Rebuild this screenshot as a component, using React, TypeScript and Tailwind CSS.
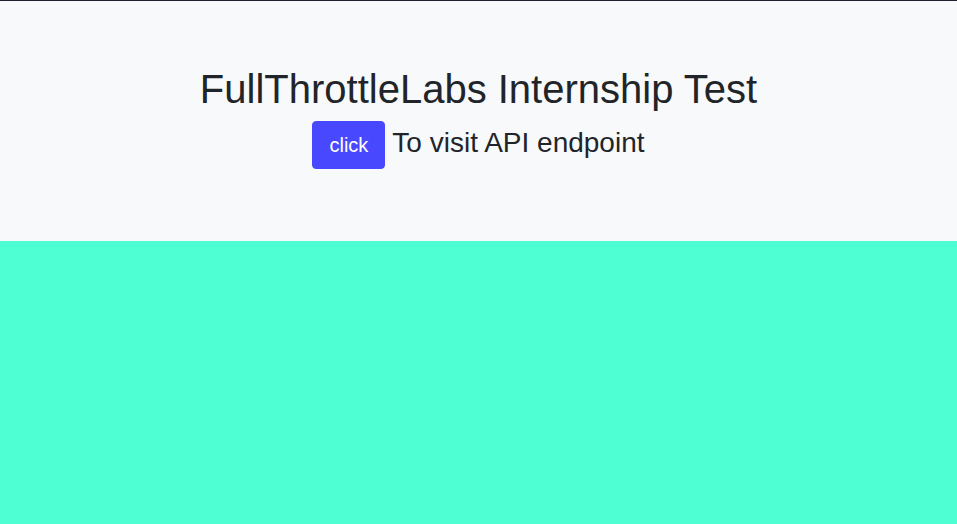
import React from 'react';

const App: React.FC = () => {
    return (
        <div className="flex flex-col min-h-[524px] w-full font-['Liberation_Sans',Arial,sans-serif] text-[#212529]">
            <div className="border-t border-[#22222e] bg-[#f8f9fa] pt-16 pb-[72px] flex flex-col items-center">
                <h1 className="text-[40px] leading-[48px] mb-2">FullThrottleLabs Internship Test</h1>
                <div className="flex flex-row items-center gap-[7px]">
                    <button className="bg-[#4848ff] text-white text-[20px] leading-[30px] px-4 py-2 rounded-[4px] border border-[#4848ff]">
                        click
                    </button>
                    <span className="text-[28px] leading-[34px] mb-1">To visit API endpoint</span>
                </div>
            </div>
            <div className="flex-1 bg-[#4fffd4]"></div>
        </div>
    );
};

export default App;
